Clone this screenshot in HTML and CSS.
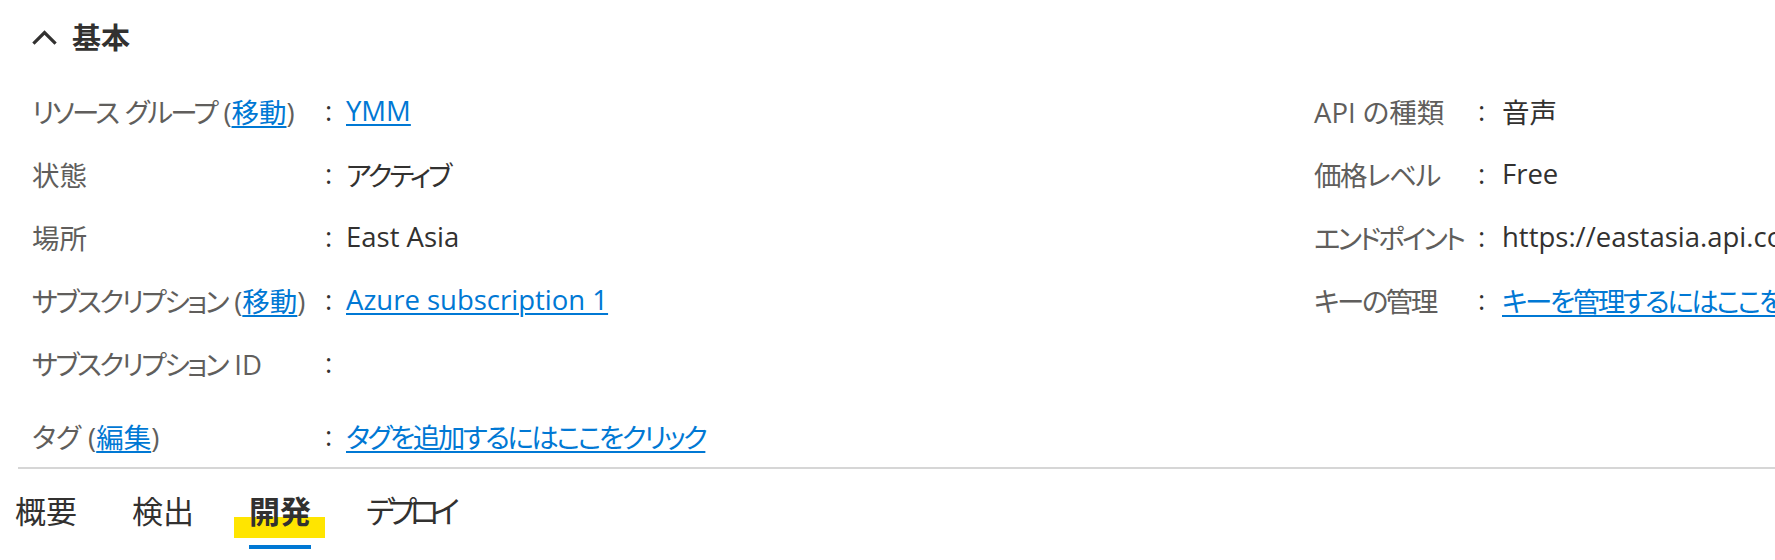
FILE: index.html
```html
<!DOCTYPE html>
<html lang="ja">
<head>
<meta charset="utf-8">
<title>基本</title>
<link rel="stylesheet" href="styles.css">
</head>
<body>
<section class="essentials">
  <div class="heading">
    <svg class="chevron" width="25" height="16" viewBox="0 0 25 16" aria-hidden="true">
      <path d="M1.4 14.6 L12.5 3.5 L23.6 14.6" fill="none" stroke="#323130" stroke-width="3.2"/>
    </svg>
    <h2 class="title">基本</h2>
  </div>
  <div class="props">
    <div class="col col-left">
      <div class="row"><span class="label"><span class="kana">リソース</span> <span class="kana">グループ</span> (<a href="#">移動</a>)</span><span class="colon">:</span><span class="value"><a href="#">YMM</a></span></div>
      <div class="row"><span class="label">状態</span><span class="colon">:</span><span class="value"><span class="kana-w">アクティブ</span></span></div>
      <div class="row"><span class="label">場所</span><span class="colon">:</span><span class="value">East Asia</span></div>
      <div class="row"><span class="label"><span class="kana">サブスクリプション</span> (<a href="#">移動</a>)</span><span class="colon">:</span><span class="value"><a href="#">Azure subscription 1</a></span></div>
      <div class="row"><span class="label"><span class="kana">サブスクリプション</span> ID</span><span class="colon">:</span><span class="value"></span></div>
      <div class="row row-tags"><span class="label">タグ (<a href="#">編集</a>)</span><span class="colon">:</span><span class="value"><a href="#" class="kana">タグを追加するにはここをクリック</a></span></div>
    </div>
    <div class="col col-right">
      <div class="row"><span class="label">API の種類</span><span class="colon">:</span><span class="value">音声</span></div>
      <div class="row"><span class="label"><span class="kana-s">価格レベル</span></span><span class="colon">:</span><span class="value">Free</span></div>
      <div class="row"><span class="label"><span class="kana-w">エンドポイント</span></span><span class="colon">:</span><span class="value">https://eastasia.api.cognitive.microsoft.com/sts/v1.0/issuetoken</span></div>
      <div class="row"><span class="label"><span class="kana">キーの管理</span></span><span class="colon">:</span><span class="value"><a href="#" class="kana">キーを管理するにはここをクリック</a></span></div>
    </div>
  </div>
</section>
<nav class="tabs">
  <span class="tab">概要</span>
  <span class="tab">検出</span>
  <span class="tab tab-active"><span class="highlight"></span><span class="tab-text">開発</span></span>
  <span class="tab"><span class="tab-kana">デプロイ</span></span>
</nav>
</body>
</html>
```

FILE: styles.css
```css
html, body {
  margin: 0;
  padding: 0;
  background: #ffffff;
}

body {
  width: 1775px;
  height: 560px;
  overflow: hidden;
  font-family: "Open Sans", "Noto Sans CJK JP", sans-serif;
  font-feature-settings: "palt";
  color: #323130;
}

.essentials {
  margin-left: 18px;
  padding: 18px 0 0 14px;
  border-bottom: 2px solid #d6d6d6;
}

.heading {
  display: flex;
  align-items: center;
  gap: 15px;
  height: 40px;
}

.chevron {
  display: block;
  flex: none;
  margin-top: -2px;
}

.title {
  margin: 0;
  font-size: 29px;
  line-height: 40px;
  font-weight: 700;
  color: #323130;
}

.props {
  margin-top: 21px;
  display: grid;
  grid-template-columns: 1282px 1282px;
  font-size: 27.5px;
}

.col {
  display: flex;
  flex-direction: column;
}

.row {
  display: grid;
  height: 63px;
  align-items: center;
  white-space: nowrap;
}

.col-left .row {
  grid-template-columns: 293px 21px 1fr;
}

.col-right .row {
  grid-template-columns: 164px 24px 1fr;
}

.row-tags {
  margin-top: 10px;
}

.label {
  color: #605e5c;
}

.colon {
  color: #323130;
}

.value {
  color: #323130;
}

.kana {
  letter-spacing: -2.5px;
}

.kana-w {
  letter-spacing: -2.8px;
}

.kana-s {
  letter-spacing: -1.4px;
}

a {
  color: #0078d4;
  text-decoration: underline;
  text-decoration-thickness: 2px;
  text-underline-offset: 3px;
}

.tabs {
  display: flex;
  gap: 55px;
  padding-left: 15px;
}

.tab {
  position: relative;
  font-size: 31px;
  line-height: 40px;
  padding-top: 22px;
  padding-bottom: 14px;
  border-bottom: 4px solid transparent;
  color: #323130;
  white-space: nowrap;
}

.tab-kana {
  letter-spacing: -7px;
}

.tab-active {
  font-weight: 700;
  border-bottom-color: #0078d4;
}

.tab-text {
  position: relative;
}

.highlight {
  position: absolute;
  left: -15px;
  top: 48px;
  width: 91px;
  height: 21px;
  background: #ffe500;
}
```
